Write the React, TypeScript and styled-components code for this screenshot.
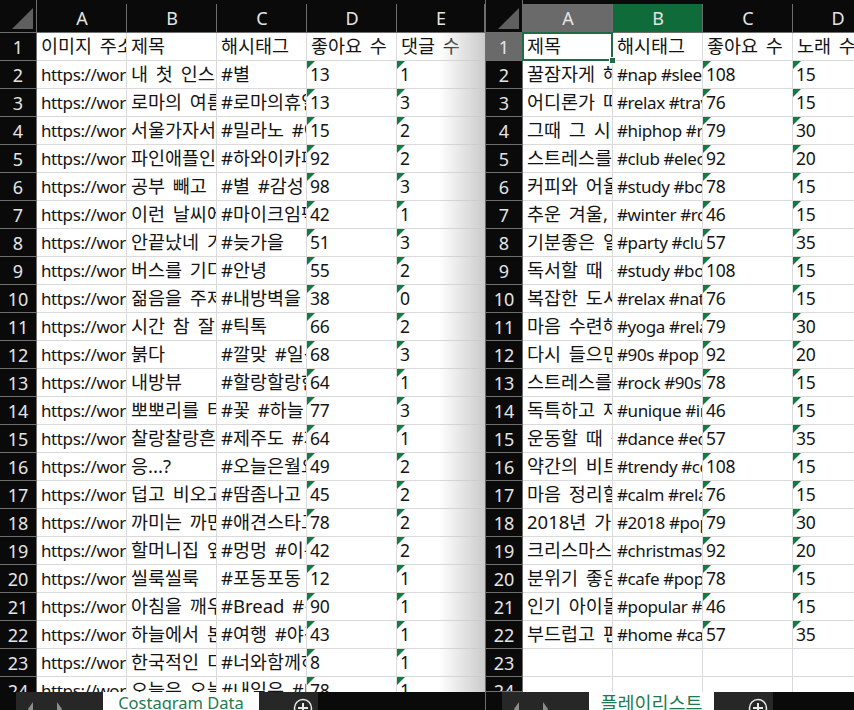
import React from 'react'
import styled, { createGlobalStyle } from 'styled-components'

const GlobalStyle = createGlobalStyle`
    html, body {
        margin: 0;
        padding: 0;
        background: #0a0a0a;
    }
`

const FONT = `'Noto Sans', 'Noto Sans CJK KR', sans-serif`

const Page = styled.div`
    display: flex;
    width: 854px;
    height: 710px;
    overflow: hidden;
    font-family: ${FONT};
`
const Pane = styled.div<{ $width: number; $divider?: boolean }>`
    position: relative;
    display: flex;
    flex-direction: column;
    flex: none;
    width: ${(p) => p.$width}px;
    height: 710px;
    box-sizing: border-box;
    border-right: ${(p) => (p.$divider ? '1px solid #6e6e6e' : 'none')};
`
const Grid = styled.div<{ $columns: string }>`
    display: grid;
    grid-template-columns: ${(p) => p.$columns};
    grid-template-rows: 33px;
    grid-auto-rows: 28px;
    height: 692px;
    flex: none;
    overflow: hidden;
    background: #fff;
`
const Corner = styled.div`
    position: relative;
    background: #0a0a0a;
    border-right: 1px solid #6e6e6e;
    border-bottom: 1px solid #6e6e6e;
    box-sizing: border-box;
    &::after {
        content: '';
        position: absolute;
        right: 3px;
        bottom: 3px;
        border-style: solid;
        border-width: 0 0 21px 21px;
        border-color: transparent transparent #5f5f5f transparent;
    }
`
const ColHead = styled.div<{ $state?: 'col' | 'cell' }>`
    display: flex;
    align-items: center;
    justify-content: center;
    box-sizing: border-box;
    padding-top: 4px;
    font-size: 18px;
    color: #e4e4e4;
    border-bottom: 1px solid #6e6e6e;
    position: relative;
    background: ${(p) =>
        p.$state === 'col'
            ? 'linear-gradient(#0a0a0a 4px, #6a6a6a 4px)'
            : p.$state === 'cell'
            ? 'linear-gradient(#0a0a0a 4px, #0f6b3a 4px)'
            : '#0a0a0a'};
    &::after {
        content: '';
        position: absolute;
        right: 0;
        top: 4px;
        bottom: 0;
        width: 1px;
        background: #6e6e6e;
    }
`
const RowHead = styled.div<{ $active?: boolean }>`
    display: flex;
    align-items: center;
    justify-content: center;
    box-sizing: border-box;
    font-size: 18px;
    color: #e4e4e4;
    background: ${(p) => (p.$active ? '#6a6a6a' : '#0a0a0a')};
    border-right: 1px solid #6e6e6e;
    border-bottom: 1px solid #6e6e6e;
`
const Cell = styled.div<{ $flag?: boolean; $selected?: boolean; $kind: 'hangul' | 'latin' | 'number' }>`
    position: relative;
    box-sizing: border-box;
    padding-left: ${(p) => (p.$kind === 'number' ? '3px' : '4px')};
    font-size: ${(p) => (p.$kind === 'hangul' ? '18.5px' : p.$kind === 'latin' ? '17px' : '17.5px')};
    letter-spacing: ${(p) => (p.$kind === 'latin' ? '-0.4px' : p.$kind === 'number' ? '-0.2px' : '0')};
    word-spacing: ${(p) => (p.$kind === 'hangul' ? '3px' : '0')};
    line-height: ${(p) => (p.$kind === 'hangul' ? '25px' : '27px')};
    color: #141414;
    white-space: nowrap;
    overflow: ${(p) => (p.$selected ? 'visible' : 'hidden')};
    border-right: 1px solid #dadada;
    border-bottom: 1px solid #dadada;
    background: #fff;
    &::before {
        content: '';
        display: ${(p) => (p.$flag ? 'block' : 'none')};
        position: absolute;
        left: 0;
        top: 0;
        border-style: solid;
        border-width: 8px 8px 0 0;
        border-color: #107c41 transparent transparent transparent;
    }
    &::after {
        content: '';
        display: ${(p) => (p.$selected ? 'block' : 'none')};
        position: absolute;
        left: -1px;
        top: -1px;
        right: -1px;
        bottom: -1px;
        border: 2px solid #1e6b45;
    }
`
const Handle = styled.span`
    position: absolute;
    right: -4px;
    bottom: -4px;
    width: 5px;
    height: 5px;
    z-index: 1;
    background: #1e6b45;
    border: 1px solid #fff;
`
const EdgeShade = styled.div`
    position: absolute;
    top: 33px;
    right: 0;
    width: 46px;
    height: 659px;
    pointer-events: none;
    background: linear-gradient(to right, rgba(200, 200, 200, 0), rgba(200, 200, 200, 0.95));
`
const TabBar = styled.div<{ $ruled?: boolean }>`
    display: flex;
    flex: 1;
    min-height: 0;
    background: #0a0a0a;
    border-top: ${(p) => (p.$ruled ? '1px solid #6e6e6e' : 'none')};
    margin-top: ${(p) => (p.$ruled ? '-1px' : '0')};
`
const Nav = styled.div`
    display: flex;
    align-items: flex-end;
    justify-content: space-between;
    box-sizing: border-box;
    width: 87px;
    margin-left: 16px;
    padding: 0 41px 0 12px;
    background: #272727;
`
const Arrow = styled.span<{ $right?: boolean }>`
    width: 0;
    height: 0;
    border-style: solid;
    border-width: 7px 0 7px 0;
    border-color: transparent #8c8c8c;
    border-left-width: ${(p) => (p.$right ? '5px' : '0')};
    border-right-width: ${(p) => (p.$right ? '0' : '5px')};
    transform: translateY(6px);
`
const Tab = styled.div<{ $width: number; $size: number; $ruled?: boolean }>`
    display: flex;
    align-items: center;
    justify-content: center;
    flex: none;
    width: ${(p) => p.$width}px;
    margin-top: ${(p) => (p.$ruled ? '-1px' : '0')};
    background: #fff;
    color: #1f7a50;
    font-size: ${(p) => p.$size}px;
    line-height: 22px;
    padding-top: 4px;
    box-sizing: border-box;
    white-space: nowrap;
`
const AddSheet = styled.div`
    display: flex;
    justify-content: flex-end;
    flex: none;
    box-sizing: border-box;
    width: 59px;
    padding: 6px 5px 0 0;
    background: #272727;
`

const PlusIcon = () => (
    <svg width="20" height="20" viewBox="0 0 20 20" fill="none" stroke="#e8e8e8">
        <circle cx="10" cy="10" r="8.5" strokeWidth="1.5" />
        <path d="M5 10h10M10 5v10" strokeWidth="2" />
    </svg>
)

const instaTitles = ['이미지 주소', '제목', '해시태그', '좋아요 수', '댓글 수']
const instaB = ['내 첫 인스타그램', '로마의 여름휴가', '서울가자서울', '파인애플인가', '공부 빼고', '이런 날씨에', '안끝났네 가을', '버스를 기다리며', '젊음을 주제로', '시간 참 잘 간다', '붉다', '내방뷰', '뽀뽀리를 타고', '찰랑찰랑흔들', '응...?', '덥고 비오고', '까미는 까만색', '할머니집 앞', '씰룩씰룩', '아침을 깨우는', '하늘에서 본', '한국적인 디자인', '오늘은 오늘']
const instaC = ['#별', '#로마의휴일 #여행', '#밀라노 #여행', '#하와이카페 #', '#별 #감성', '#마이크임팩트', '#늦가을', '#안녕', '#내방벽을', '#틱톡', '#깔맞 #일상', '#할랑할랑한', '#꽃 #하늘', '#제주도 #제주', '#오늘은월요일', '#땀좀나고', '#애견스타그램', '#멍멍 #이쁜', '#포동포동', '#Bread #것', '#여행 #야경', '#너와함께하는', '#내일은 #내일']
const instaD = ['13', '13', '15', '92', '98', '42', '51', '55', '38', '66', '68', '64', '77', '64', '49', '45', '78', '42', '12', '90', '43', '8', '78']
const instaE = ['1', '3', '2', '2', '3', '1', '3', '2', '0', '2', '3', '1', '3', '1', '2', '2', '2', '2', '1', '1', '1', '1', '1']

const playTitles = ['제목', '해시태그', '좋아요 수', '노래 수']
const playA = ['꿀잠자게 해주는', '어디론가 떠나는', '그때 그 시절', '스트레스를 날려', '커피와 어울리는', '추운 겨울, 따뜻한', '기분좋은 일', '독서할 때 듣는', '복잡한 도시', '마음 수련해요', '다시 들으면', '스트레스를 날려', '독특하고 재미', '운동할 때 듣는', '약간의 비트', '마음 정리할', '2018년 가장', '크리스마스 캐롤', '분위기 좋은', '인기 아이돌', '부드럽고 편안']
const playB = ['#nap #sleep', '#relax #travel', '#hiphop #rap', '#club #electro', '#study #book', '#winter #romance', '#party #club', '#study #book', '#relax #nature', '#yoga #relax', '#90s #pop', '#rock #90s', '#unique #indie', '#dance #edm', '#trendy #cool', '#calm #relax', '#2018 #pop', '#christmas #carol', '#cafe #pop', '#popular #idol', '#home #cafe']
const playC = ['108', '76', '79', '92', '78', '46', '57', '108', '76', '79', '92', '78', '46', '57', '108', '76', '79', '92', '78', '46', '57']
const playD = ['15', '15', '30', '20', '15', '15', '35', '15', '15', '30', '20', '15', '15', '35', '15', '15', '30', '20', '15', '15', '35']

type Column = { letter: string; title: string; values: string[]; flagged?: boolean }

const instaColumns: Column[] = [
    { letter: 'A', title: instaTitles[0], values: instaD.map(() => 'https://wordpress.com') },
    { letter: 'B', title: instaTitles[1], values: instaB },
    { letter: 'C', title: instaTitles[2], values: instaC },
    { letter: 'D', title: instaTitles[3], values: instaD, flagged: true },
    { letter: 'E', title: instaTitles[4], values: instaE, flagged: true },
]
const playColumns: Column[] = [
    { letter: 'A', title: playTitles[0], values: playA },
    { letter: 'B', title: playTitles[1], values: playB },
    { letter: 'C', title: playTitles[2], values: playC, flagged: true },
    { letter: 'D', title: playTitles[3], values: playD, flagged: true },
]

const ROWS = 24

const kindOf = (value: string) =>
    /[가-힣]/.test(value) ? 'hangul' : /^\d+$/.test(value) ? 'number' : 'latin'

const Sheet = ({ columns, template, active }: { columns: Column[]; template: string; active?: boolean }) => (
    <Grid $columns={template}>
        <Corner />
        {columns.map((col, i) => (
            <ColHead key={col.letter} $state={active ? (i === 0 ? 'col' : i === 1 ? 'cell' : undefined) : undefined}>
                {col.letter}
            </ColHead>
        ))}
        {Array.from({ length: ROWS }, (_, r) => (
            <React.Fragment key={r}>
                <RowHead $active={active && r === 0}>{r + 1}</RowHead>
                {columns.map((col, i) => {
                    const value = (r === 0 ? col.title : col.values[r - 1]) ?? ''
                    const selected = active && r === 0 && i === 0
                    return (
                        <Cell
                            key={col.letter}
                            $kind={kindOf(value)}
                            $flag={r > 0 && col.flagged && !!value}
                            $selected={selected}
                        >
                            {value}
                            {selected && <Handle />}
                        </Cell>
                    )
                })}
            </React.Fragment>
        ))}
    </Grid>
)

const App = () => (
    <Page>
        <GlobalStyle />
        <Pane $width={486} $divider>
            <Sheet columns={instaColumns} template="37px 90px 90px 90px 90px 88px" />
            <EdgeShade />
            <TabBar>
                <Nav>
                    <Arrow />
                    <Arrow $right />
                </Nav>
                <Tab $width={156} $size={16.5}>Costagram Data</Tab>
                <AddSheet>
                    <PlusIcon />
                </AddSheet>
            </TabBar>
        </Pane>
        <Pane $width={368}>
            <Sheet columns={playColumns} template="37px 90px 90px 90px 90px" active />
            <TabBar $ruled>
                <Nav>
                    <Arrow />
                    <Arrow $right />
                </Nav>
                <Tab $width={125} $size={18.5} $ruled>플레이리스트</Tab>
                <AddSheet>
                    <PlusIcon />
                </AddSheet>
            </TabBar>
        </Pane>
    </Page>
)

export default App
